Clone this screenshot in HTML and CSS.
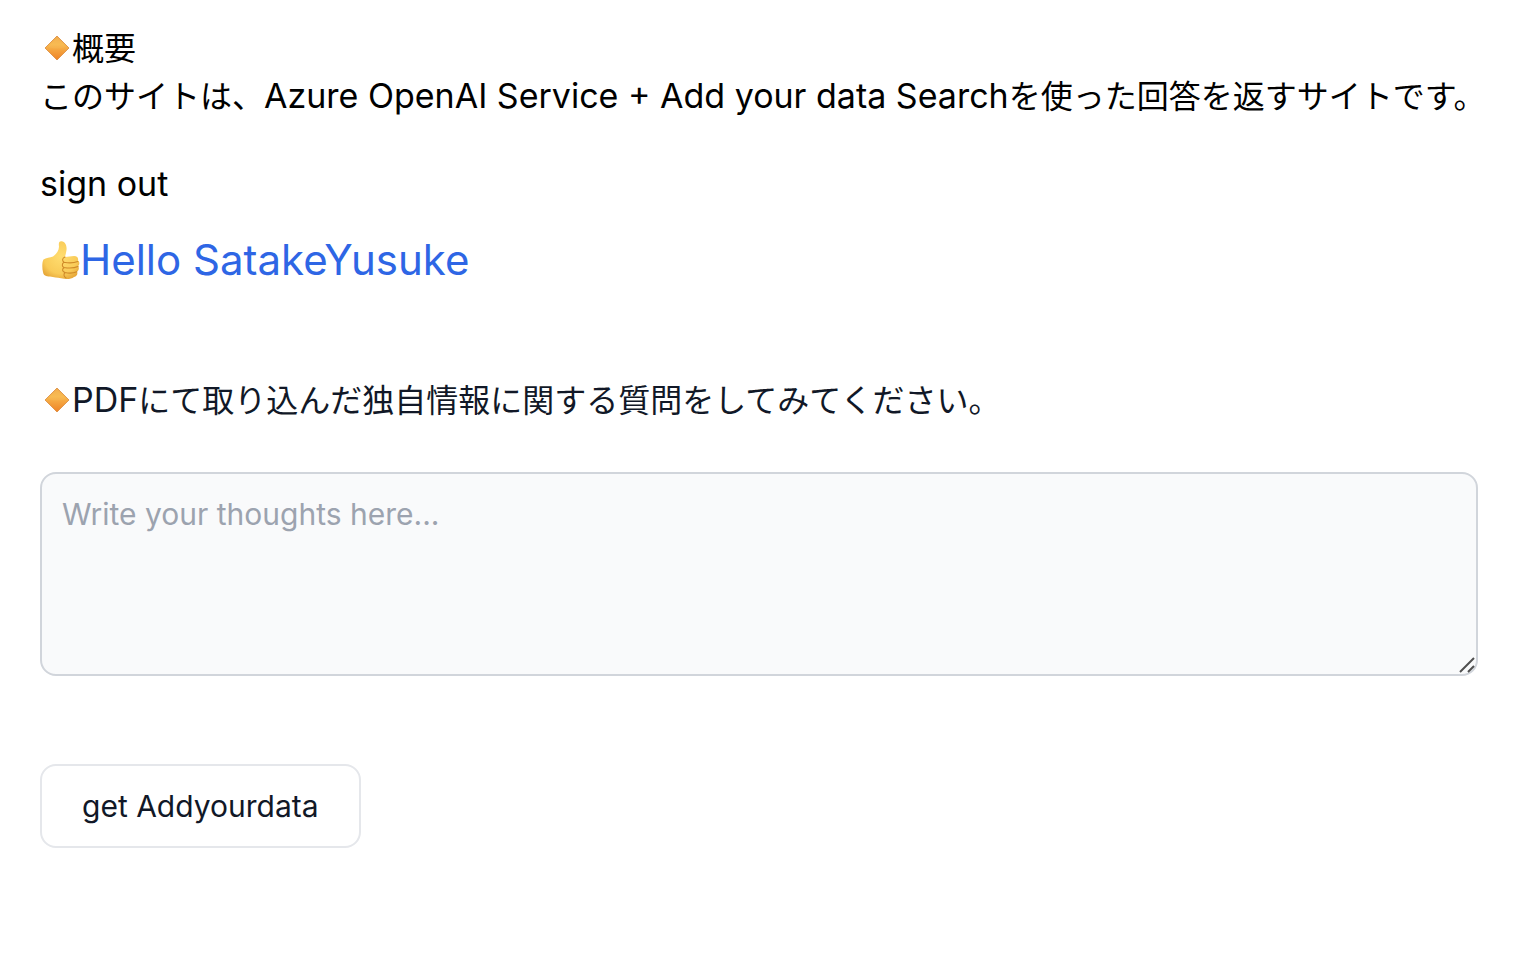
FILE: index.html
```html
<!DOCTYPE html>
<html lang="ja">
<head>
<meta charset="utf-8">
<meta name="viewport" content="width=device-width, initial-scale=1">
<title>Azure OpenAI Service + Add your data Search</title>
<link rel="stylesheet" href="styles.css">
</head>
<body>
<svg class="defs" aria-hidden="true">
  <defs>
    <linearGradient id="amber" x1="0" y1="0" x2="0" y2="1">
      <stop offset="0" stop-color="#f0a94a"/>
      <stop offset=".35" stop-color="#f8b84e"/>
      <stop offset="1" stop-color="#ee8226"/>
    </linearGradient>
    <radialGradient id="skin" cx=".5" cy=".4" r=".65">
      <stop offset="0" stop-color="#ffdd70"/>
      <stop offset=".7" stop-color="#f9cb58"/>
      <stop offset="1" stop-color="#e6a638"/>
    </radialGradient>
    <symbol id="diamond" viewBox="0 0 32 32">
      <path d="M17 4 29 16 17 28 5 16Z" fill="url(#amber)" stroke="#d98a3c" stroke-width=".8" stroke-linejoin="round"/>
      <path d="M8 15 17 6 26 15Q17 18 8 15Z" fill="#fbc867" opacity=".2"/>
    </symbol>
    <symbol id="thumb" viewBox="0 0 40 40">
      <path d="M3.500 19.500C6 17.500 10 18 13 16.500C16.500 14 19 10.500 19 6.500C18.500 3 19 1 21.500 1.200C25.500 1.500 27 6 26.500 10C26.300 12.500 25.500 14.500 25 17L34 16C37.500 16 38.500 18 38 20.500C40 22 39.500 25 38.200 26C39.500 28 38.800 31 37 31.500C38 34 37 36.500 34 37C31 39.500 26 39.500 21 38.300C17 37.300 14 37.500 10 36.500C6 36.500 3.500 35.500 3 32C2 28 2 22 3.500 19.500Z" fill="url(#skin)"/>
      <path d="M25 17C22 18 22 21 24 22.300M37.800 21.500C34 23 28 23 24 22.300C21.500 24 22 26.500 24 27.500M38 26.500C34 28.200 28 28.200 24 27.500C21.500 29.500 22.500 31.500 25 32.500M36.800 31.800C33 33.300 28 33.200 25 32.500C23.500 34 23.500 36.500 26 38" fill="none" stroke="#cf8a28" stroke-width="1.100" stroke-linecap="round"/>
    </symbol>
  </defs>
</svg>
<main class="page">
  <section class="intro">
    <p class="text"><svg class="emoji" role="img" aria-label="diamond"><use href="#diamond"/></svg>概要</p>
    <p class="text">このサイトは、<span class="latin">Azure OpenAI Service + Add your data Search</span>を使った回答を返すサイトです。</p>
  </section>
  <button class="signout" type="button">sign out</button>
  <h1 class="greeting"><svg class="emoji emoji-large" role="img" aria-label="thumbs up"><use href="#thumb"/></svg>Hello SatakeYusuke</h1>
  <form class="ask">
    <label class="text prompt" for="message"><svg class="emoji" role="img" aria-label="diamond"><use href="#diamond"/></svg><span class="latin">PDF</span>にて取り込んだ独自情報に関する質問をしてみてください。</label>
    <div class="field">
      <textarea class="message" id="message" rows="4" placeholder="Write your thoughts here..."></textarea>
      <svg class="grip" viewBox="0 0 16 16" aria-hidden="true"><path d="M1 15 15 1M9 15 15 9"/></svg>
    </div>
    <button class="submit" type="button">get Addyourdata</button>
  </form>
</main>
</body>
</html>
```
FILE: styles.css
```css
* { box-sizing: border-box; }
body {
  margin: 0;
  background: #fff;
  color: #000;
  font-family: Inter, "Noto Sans CJK JP", sans-serif;
}
.defs { position: absolute; width: 0; height: 0; }
.page {
  display: flex;
  flex-direction: column;
  align-items: flex-start;
  padding: 22px 40px 40px;
}
.text {
  margin: 0;
  font-family: "Noto Sans CJK JP", Inter, sans-serif;
  font-size: 32px;
  line-height: 48px;
}
.latin {
  font-family: Inter, sans-serif;
  font-size: 34px;
  line-height: 1;
}
.emoji { width: 32px; height: 32px; vertical-align: -4px; }
.emoji-large { width: 40px; height: 40px; vertical-align: -5px; }
.intro { margin-bottom: 42px; }
.signout {
  padding: 0;
  border: 0;
  background: none;
  color: inherit;
  font-family: inherit;
  font-size: 34px;
  line-height: 48px;
}
.greeting {
  margin: 24px 0 86px;
  color: #2e66e5;
  font-size: 42px;
  font-weight: 400;
  line-height: 56px;
}
.ask {
  display: flex;
  flex-direction: column;
  align-items: flex-start;
  align-self: stretch;
  padding-right: 16px;
}
.prompt { margin-bottom: 50px; color: #111827; }
.field { position: relative; display: flex; width: 100%; margin-bottom: 88px; }
.message {
  display: block;
  width: 100%;
  padding: 20px;
  border: 2px solid #d1d5db;
  border-radius: 16px;
  background: #f9fafb;
  color: #111827;
  font-family: inherit;
  font-size: 30px;
  line-height: 40px;
  resize: none;
}
.message::placeholder { color: #9ca3af; opacity: 1; }
.grip {
  position: absolute;
  right: 3px;
  bottom: 3px;
  width: 16px;
  height: 16px;
  fill: none;
  stroke: #505050;
  stroke-width: 2;
}
.submit {
  padding: 20px 40px;
  border: 2px solid #e5e7eb;
  border-radius: 16px;
  background: #fff;
  color: #111827;
  font-family: inherit;
  font-size: 30px;
  line-height: 40px;
}
```
